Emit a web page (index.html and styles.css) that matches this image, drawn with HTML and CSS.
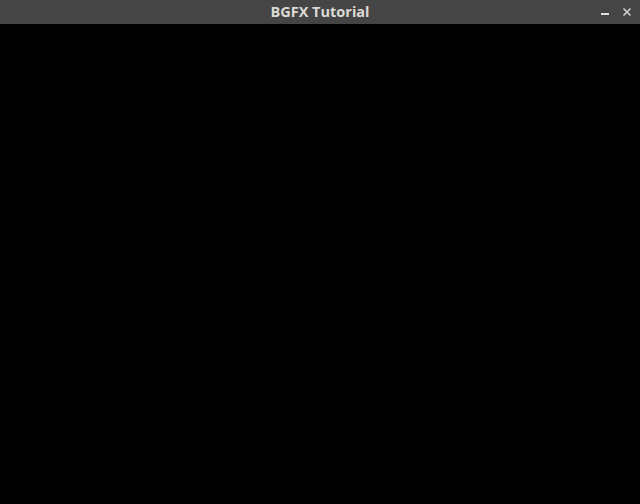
FILE: index.html
```html
<!DOCTYPE html>
<html>
<head>
<meta charset="utf-8">
<link rel="stylesheet" href="styles.css">
</head>
<body>
<div class="window">
  <div class="titlebar">
    <span class="title">BGFX Tutorial</span>
    <div class="controls">
      <svg class="btn" width="10" height="10" viewBox="0 0 10 10"><rect x="1" y="6" width="8" height="2" fill="#dcdcdc"/></svg>
      <svg class="btn" width="10" height="10" viewBox="0 0 10 10"><path d="M1.5 1.5 L8.5 8.5 M8.5 1.5 L1.5 8.5" stroke="#d0d0d0" stroke-width="1.6"/></svg>
    </div>
  </div>
  <div class="content"></div>
</div>
</body>
</html>
```
FILE: styles.css
```css
html, body { margin: 0; padding: 0; background: #000; }
.window { width: 640px; height: 504px; display: flex; flex-direction: column; }
.titlebar {
  height: 23px; padding-bottom: 1px; background: #454545; position: relative;
  display: flex; align-items: center; justify-content: center;
  flex: none;
}
.title {
  font-family: "Open Sans", "DejaVu Sans", sans-serif; font-weight: 700;
  font-size: 14.5px; color: #dcdad5; letter-spacing: 0;
}
.controls {
  position: absolute; right: 8px; top: 7px;
  display: flex; gap: 12px;
}
.btn { display: block; }
.content { flex: 1; background: #000; }
```
